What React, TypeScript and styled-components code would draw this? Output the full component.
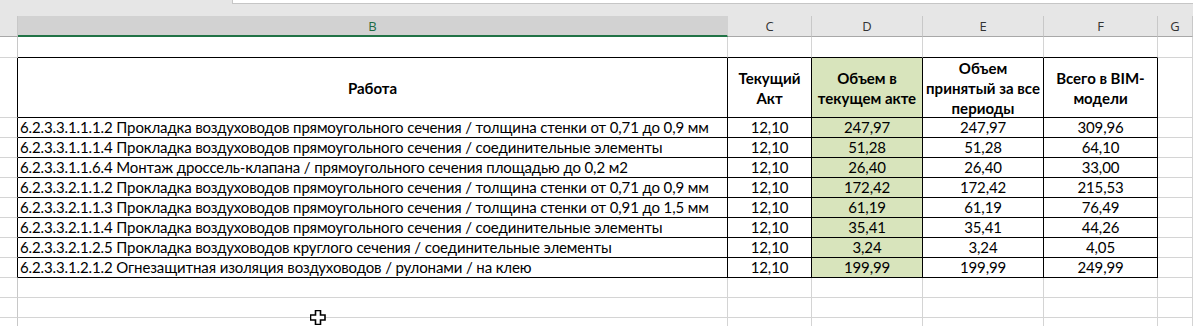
import React from "react";
import styled, { createGlobalStyle } from "styled-components";

const GRID = "#d4d4d4";
const INK = "#000";
const GREEN_FILL = "#d8e4bc";

type Row = {
  work: string;
  act: string;
  current: string;
  total: string;
  bim: string;
};

const rows: Row[] = [
  { work: "6.2.3.3.1.1.1.2 Прокладка воздуховодов прямоугольного сечения / толщина стенки от 0,71 до 0,9 мм", act: "12,10", current: "247,97", total: "247,97", bim: "309,96" },
  { work: "6.2.3.3.1.1.1.4 Прокладка воздуховодов прямоугольного сечения / соединительные элементы", act: "12,10", current: "51,28", total: "51,28", bim: "64,10" },
  { work: "6.2.3.3.1.1.6.4 Монтаж дроссель-клапана / прямоугольного сечения площадью до 0,2 м2", act: "12,10", current: "26,40", total: "26,40", bim: "33,00" },
  { work: "6.2.3.3.2.1.1.2 Прокладка воздуховодов прямоугольного сечения / толщина стенки от 0,71 до 0,9 мм", act: "12,10", current: "172,42", total: "172,42", bim: "215,53" },
  { work: "6.2.3.3.2.1.1.3 Прокладка воздуховодов прямоугольного сечения / толщина стенки от 0,91 до 1,5 мм", act: "12,10", current: "61,19", total: "61,19", bim: "76,49" },
  { work: "6.2.3.3.2.1.1.4 Прокладка воздуховодов прямоугольного сечения / соединительные элементы", act: "12,10", current: "35,41", total: "35,41", bim: "44,26" },
  { work: "6.2.3.3.2.1.2.5 Прокладка воздуховодов круглого сечения / соединительные элементы", act: "12,10", current: "3,24", total: "3,24", bim: "4,05" },
  { work: "6.2.3.3.1.2.1.2 Огнезащитная изоляция воздуховодов / рулонами / на клею", act: "12,10", current: "199,99", total: "199,99", bim: "249,99" },
];

const headers = [
  { lines: ["Работа"], fill: false },
  { lines: ["Текущий", "Акт"], fill: false },
  { lines: ["Объем в", "текущем акте"], fill: true },
  { lines: ["Объем", "принятый за все", "периоды"], fill: false },
  { lines: ["Всего в BIM-", "модели"], fill: false },
];

const letters = ["B", "C", "D", "E", "F", "G"];

const GlobalStyle = createGlobalStyle`
  html, body {
    margin: 0;
    padding: 0;
    background: #fff;
  }
  body {
    width: 1193px;
    height: 326px;
    overflow: hidden;
  }
`;

const Sheet = styled.div`
  position: relative;
  width: 1193px;
  height: 326px;
  overflow: hidden;
  font-family: Lato, "Liberation Sans", sans-serif;
  color: #000;
`;

const TopStrip = styled.div`
  display: flex;
  height: 16px;
  background: #e6e6e6;
`;

const FormulaBox = styled.div`
  margin-left: 232px;
  flex: 1;
  height: 3px;
  background: #fff;
  border-left: 1px solid #c6c6c6;
  border-bottom: 1px solid #c6c6c6;
`;

const Columns = "18px 710px 84px 111px 121px 114px 1fr";

const HeadRow = styled.div`
  display: grid;
  grid-template-columns: ${Columns};
  grid-template-rows: 21px;
`;

const Corner = styled.div`
  background: #e6e6e6;
  border-right: 1px solid #c8c8c8;
  border-bottom: 1px solid #a8a8a8;
`;

const Letter = styled.div<{ $active?: boolean }>`
  display: flex;
  align-items: center;
  justify-content: center;
  box-sizing: border-box;
  background: ${(p) => (p.$active ? "#d2d2d2" : "#e6e6e6")};
  border-right: 1px solid ${(p) => (p.$active ? "#d2d2d2" : "#c8c8c8")};
  border-bottom: ${(p) => (p.$active ? "2px solid #217346" : "1px solid #a8a8a8")};
  font-family: "Open Sans", "Noto Sans", sans-serif;
  font-size: 13px;
  color: ${(p) => (p.$active ? "#1d6b44" : "#333")};
  padding-top: ${(p) => (p.$active ? "1px" : "0")};
`;

const GridRow = styled.div<{ $h: number }>`
  display: grid;
  grid-template-columns: ${Columns};
  grid-template-rows: ${(p) => p.$h}px;
`;

const RowHead = styled.div<{ $edge?: boolean }>`
  box-sizing: border-box;
  background: #fff;
  border-right: 1px solid ${(p) => (p.$edge ? INK : "#c8c8c8")};
  border-bottom: 1px solid ${GRID};
`;

const Cell = styled.div<{
  $fill?: boolean;
  $right?: string;
  $bottom?: string;
  $align?: "left" | "center";
  $bold?: boolean;
}>`
  box-sizing: border-box;
  min-height: 0;
  display: flex;
  flex-direction: column;
  justify-content: center;
  align-items: ${(p) => (p.$align === "left" ? "flex-start" : "center")};
  padding: ${(p) => (p.$align === "left" ? "0 0 0 2px" : "0")};
  background: ${(p) => (p.$fill ? GREEN_FILL : "#fff")};
  border-right: 1px solid ${(p) => p.$right || GRID};
  border-bottom: 1px solid ${(p) => p.$bottom || GRID};
  font-size: 15px;
  letter-spacing: ${(p) => (p.$bold ? "0" : "-0.12px")};
  line-height: ${(p) => (p.$bold ? "20px" : "19px")};
  font-weight: ${(p) => (p.$bold ? 700 : 400)};
  text-align: center;
  white-space: nowrap;
`;

const Cursor = styled.svg`
  position: absolute;
  left: 310px;
  top: 310px;
`;

export default function App() {
  return (
    <>
      <GlobalStyle />
      <Sheet>
        <TopStrip>
          <FormulaBox />
        </TopStrip>

        <HeadRow>
          <Corner />
          {letters.map((l) => (
            <Letter key={l} $active={l === "B"}>
              {l}
            </Letter>
          ))}
        </HeadRow>

        <GridRow $h={21}>
          <RowHead />
          {headers.map((_, i) => (
            <Cell key={i} $bottom={INK} />
          ))}
          <Cell />
        </GridRow>

        <GridRow $h={60}>
          <RowHead $edge />
          {headers.map((h, i) => (
            <Cell key={i} $bold $fill={h.fill} $right={INK} $bottom={INK}>
              {h.lines.map((line) => (
                <span key={line}>{line}</span>
              ))}
            </Cell>
          ))}
          <Cell />
        </GridRow>

        {rows.map((r) => (
          <GridRow key={r.work} $h={20}>
            <RowHead $edge />
            <Cell $align="left" $right={INK} $bottom={INK}>
              {r.work}
            </Cell>
            <Cell $right={INK} $bottom={INK}>{r.act}</Cell>
            <Cell $fill $right={INK} $bottom={INK}>{r.current}</Cell>
            <Cell $right={INK} $bottom={INK}>{r.total}</Cell>
            <Cell $right={INK} $bottom={INK}>{r.bim}</Cell>
            <Cell />
          </GridRow>
        ))}

        {[0, 1, 2].map((i) => (
          <GridRow key={i} $h={20}>
            <RowHead />
            <Cell />
            <Cell />
            <Cell />
            <Cell />
            <Cell />
            <Cell />
          </GridRow>
        ))}

        <Cursor width="16" height="15" viewBox="0 0 16 15">
          <path
            d="M5.5 0.5h5v4.5h4.5v5h-4.5v4.5h-5v-4.5h-5v-5h5z"
            fill="#fff"
            stroke="#000"
            strokeWidth="1.6"
          />
        </Cursor>
      </Sheet>
    </>
  );
}
